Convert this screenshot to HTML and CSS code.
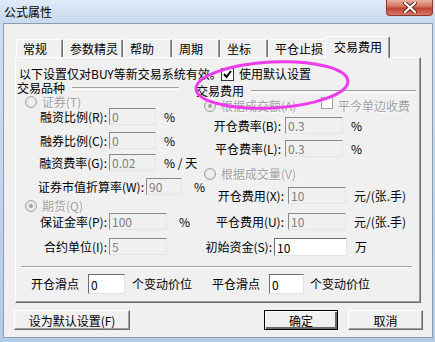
FILE: index.html
```html
<!DOCTYPE html>
<html lang="zh-CN">
<head>
    <meta charset="UTF-8">
    <title>公式属性</title>
    <link rel="stylesheet" href="styles.css">
</head>
<body>
    <div class="window">
        <div class="titlebar">
            <span class="title">公式属性</span>
            <span class="close">
                <svg width="14" height="11" viewBox="0 0 14 11">
                    <path d="M2 1 L12 10 M12 1 L2 10" stroke="#5a2a22" stroke-width="4" stroke-linecap="round"/>
                    <path d="M2 1 L12 10 M12 1 L2 10" stroke="#fff" stroke-width="2.2" stroke-linecap="round"/>
                </svg>
            </span>
        </div>
        <div class="client">
            <div class="tabs">
                <div class="tab w47">常规</div>
                <div class="tab w60">参数精灵</div>
                <div class="tab w49">帮助</div>
                <div class="tab w48">周期</div>
                <div class="tab w48">坐标</div>
                <div class="tab w59">平仓止损</div>
                <div class="tab active">交易费用</div>
            </div>
            <div class="panel">
                <div class="note-row">
                    <span class="note">以下设置仅对BUY等新交易系统有效。</span>
                    <span class="check on">
                        <svg width="11" height="11" viewBox="0 0 11 11"><path d="M2 5 L4.5 8 L9 2" fill="none" stroke="#000" stroke-width="2"/></svg>
                    </span>
                    <span>使用默认设置</span>
                </div>

                <div class="columns">
                    <div class="col col-left">
                        <div class="gb-head"><span>交易品种</span><span class="etch"></span></div>
                        <div class="opt opt-a"><span class="radio"></span><span class="dim">证券(T)</span></div>
                        <div class="row"><span class="lbl l91">融资比例(R):</span><input class="field w47" value="0" disabled><span class="unit">%</span></div>
                        <div class="row mt7"><span class="lbl l91">融券比例(C):</span><input class="field w47" value="0" disabled><span class="unit">%</span></div>
                        <div class="row mt5"><span class="lbl l91">融资费率(G):</span><input class="field w47" value="0.02" disabled><span class="unit">% / 天</span></div>
                        <div class="row mt7"><span class="lbl l128">证券市值折算率(W):</span><input class="field w36" value="90" disabled><span class="unit u12">%</span></div>
                        <div class="opt opt-b"><span class="radio on"></span><span class="dim">期货(Q)</span></div>
                        <div class="row mt1"><span class="lbl l91">保证金率(P):</span><input class="field w58" value="100" disabled><span class="unit u12">%</span></div>
                        <div class="row mt8"><span class="lbl l91">合约单位(I):</span><input class="field w58" value="5" disabled></div>
                    </div>

                    <div class="col col-right">
                        <div class="gb-head"><span>交易费用</span><span class="etch"></span></div>
                        <div class="opt opt-c">
                            <span class="opt-main"><span class="radio on"></span><span class="dim">根据成交额(A)</span></span>
                            <span class="check off"></span><span class="dim">平今单边收费</span>
                        </div>
                        <div class="row mt4"><span class="lbl l87">开仓费率(B):</span><input class="field w58" value="0.3" disabled><span class="unit">%</span></div>
                        <div class="row mt6"><span class="lbl l87">平仓费率(L):</span><input class="field w58" value="0.3" disabled><span class="unit">%</span></div>
                        <div class="opt opt-d"><span class="radio"></span><span class="dim">根据成交量(V)</span></div>
                        <div class="row mt7"><span class="lbl l90">开仓费用(X):</span><input class="field w58" value="10" disabled><span class="unit">元/(张.手)</span></div>
                        <div class="row mt9"><span class="lbl l90">平仓费用(U):</span><input class="field w58" value="10" disabled><span class="unit">元/(张.手)</span></div>
                        <div class="row row-tall mt8"><span class="lbl l78">初始资金(S):</span><input class="field live w73" value="10"><span class="unit">万</span></div>
                    </div>
                </div>

                <div class="sep"></div>

                <div class="slip-row">
                    <span class="slip-lbl">开仓滑点</span><input class="field live slip w37" value="0"><span class="slip-unit">个变动价位</span>
                    <span class="slip-lbl">平仓滑点</span><input class="field live slip w35" value="0"><span class="slip-unit last">个变动价位</span>
                </div>

                <svg class="mark" width="160" height="54" viewBox="0 0 160 54">
                    <ellipse cx="79" cy="27" rx="76" ry="23" transform="rotate(-3 79 27)" fill="none" stroke="#ec3cec" stroke-width="3"/>
                </svg>
            </div>

            <div class="buttons">
                <button class="btn btn-wide">设为默认设置(F)</button>
                <button class="btn btn-ok">确定</button>
                <button class="btn btn-cancel">取消</button>
            </div>
        </div>
    </div>
</body>
</html>
```

FILE: styles.css
```css
body {
    margin: 0;
    font-family: "Noto Sans CJK SC", sans-serif;
    font-size: 12px;
    line-height: 14px;
    color: #000;
}
.window {
    width: 435px;
    height: 342px;
    background: linear-gradient(#cfe0f2, #b4cbe5);
    overflow: hidden;
}
.titlebar {
    height: 23px;
    display: flex;
    align-items: flex-start;
    padding-left: 4px;
    background: linear-gradient(#dfeaf7, #c8daef);
}
.title {
    line-height: 23px;
    font-size: 12px;
}
.close {
    margin-left: auto;
    margin-right: 2px;
    width: 47px;
    height: 16px;
    box-sizing: border-box;
    border: 1px solid #8c3a30;
    border-top: none;
    border-radius: 0 0 4px 4px;
    background: linear-gradient(#eab1a3, #d4705e 45%, #c2432f 55%, #d7786a);
    display: flex;
    align-items: center;
    justify-content: center;
}

/* client area */
.client {
    width: 430px;
    height: 315px;
    margin-left: 3px;
    box-sizing: border-box;
    border: 1px solid #8b9db3;
    background-color: #f0f0f0;
}
.tabs {
    display: flex;
    align-items: flex-end;
    height: 21px;
    margin: 12px 0 0 12px;
}
.tab {
    height: 18px;
    box-sizing: border-box;
    padding-left: 6px;
    line-height: 17px;
    border-top: 1px solid #fff;
    border-left: 1px solid #fff;
    border-right: 1px solid #696969;
    box-shadow: inset -1px 0 #a0a0a0;
    border-radius: 2px 2px 0 0;
    background-color: #f0f0f0;
}
.w47.tab { width: 47px; }
.w60.tab { width: 60px; }
.w49.tab { width: 49px; }
.w48.tab { width: 48px; }
.w59.tab { width: 59px; }
.tab.active {
    position: relative;
    z-index: 1;
    width: 65px;
    height: 22px;
    margin-left: -2px;
    margin-bottom: -1px;
    padding-left: 8px;
    line-height: 19px;
}
.panel {
    position: relative;
    width: 406px;
    height: 246px;
    margin-left: 11px;
    box-sizing: border-box;
    border: 1px solid;
    border-color: #fff #696969 #696969 #fff;
    box-shadow: inset -1px -1px #a0a0a0;
}
.note-row {
    display: flex;
    align-items: center;
    height: 16px;
    margin-top: 8px;
    padding-left: 3px;
}
.note {
    width: 202px;
    white-space: nowrap;
}
.check {
    width: 13px;
    height: 13px;
    box-sizing: border-box;
    border: 1px solid #333;
    background-color: #fff;
    margin-right: 5px;
    display: flex;
    align-items: center;
    justify-content: center;
}
.check.off {
    width: 12px;
    height: 12px;
    border-color: #a0a0a0;
    margin-top: -6px;
}
.columns {
    display: grid;
    grid-template-columns: 178px 1fr;
}
.col-right {
    padding-top: 3px;
}
.gb-head {
    display: flex;
    align-items: center;
    height: 12px;
    line-height: 12px;
    padding-left: 1px;
}
.col-left .gb-head { margin-right: 15px; }
.col-right .gb-head { margin-right: 4px; padding-left: 2px; }
.etch {
    flex: 1;
    height: 1px;
    margin-left: 7px;
    border-top: 1px solid #a0a0a0;
    border-bottom: 1px solid #fff;
}
.opt {
    display: flex;
    align-items: center;
    height: 12px;
    line-height: 12px;
}
.opt-a { margin-top: 2px; padding-left: 9px; }
.opt-b { margin-top: 5px; padding-left: 9px; }
.opt-c { margin-top: 2px; height: 14px; padding-left: 10px; }
.opt-d { margin-top: 11px; padding-left: 10px; }
.opt-main {
    display: flex;
    align-items: center;
    width: 117px;
}
.radio {
    width: 12px;
    height: 12px;
    box-sizing: border-box;
    border-radius: 50%;
    border: 1px solid #a0a0a0;
    background: radial-gradient(#f6f6f6, #dcdcdc);
    margin-right: 5px;
    display: flex;
    align-items: center;
    justify-content: center;
}
.radio.on::after {
    content: "";
    width: 4px;
    height: 4px;
    border-radius: 50%;
    background-color: #a0a0a0;
}
.dim {
    color: #a0a0a0;
    text-shadow: 1px 1px #fff;
    white-space: nowrap;
}
.row {
    display: flex;
    align-items: center;
    height: 17px;
    white-space: nowrap;
}
.row-tall { height: 18px; }
.mt1 { margin-top: 1px; }
.mt4 { margin-top: 4px; }
.mt5 { margin-top: 5px; }
.mt6 { margin-top: 6px; }
.mt7 { margin-top: 7px; }
.mt8 { margin-top: 8px; }
.mt9 { margin-top: 9px; }
.lbl {
    text-align: right;
    flex: none;
}
.l91 { width: 91px; margin-right: 2px; }
.l128 { width: 128px; margin-right: 2px; }
.l87 { width: 87px; margin-right: 4px; }
.l90 { width: 90px; margin-right: 4px; }
.l78 { width: 78px; margin-right: 2px; }
.field {
    height: 100%;
    box-sizing: border-box;
    margin: 0;
    padding: 0 0 0 2px;
    border: 1px solid;
    border-color: #8a8a8a #e3e3e3 #e3e3e3 #8a8a8a;
    background-color: #f0f0f0;
    color: #808080;
    font-family: inherit;
    font-size: 12px;
    outline: none;
}
.field.live {
    background-color: #fff;
    color: #000;
    border-color: #6d6d6d #e3e3e3 #e3e3e3 #6d6d6d;
}
.w35 { width: 35px; }
.w36 { width: 36px; }
.w37 { width: 37px; }
.w47 { width: 47px; }
.w58 { width: 58px; }
.w73 { width: 73px; }
.unit { margin-left: 8px; }
.unit.u12 { margin-left: 12px; }
.sep {
    width: 391px;
    height: 0;
    margin: 10px 0 0 5px;
    border-top: 1px solid #a0a0a0;
    border-bottom: 1px solid #fff;
}
.slip-row {
    display: flex;
    align-items: center;
    height: 20px;
    margin-top: 6px;
    padding-left: 15px;
    white-space: nowrap;
}
.slip-lbl { width: 57px; }
.slip-unit { width: 80px; padding-left: 7px; }
.slip-unit.last { width: auto; padding-left: 6px; }
.mark {
    position: absolute;
    left: 177px;
    top: 0;
    overflow: visible;
}

/* dialog buttons */
.buttons {
    display: flex;
    margin-top: 7px;
    padding: 0 9px 0 10px;
}
.btn {
    height: 20px;
    box-sizing: border-box;
    padding: 0;
    font-family: inherit;
    font-size: 12px;
    color: #000;
    background-color: #f0f0f0;
    border: 1px solid;
    border-color: #fff #696969 #696969 #fff;
    box-shadow: inset -1px -1px #a0a0a0;
}
.btn-wide { width: 116px; }
.btn-ok {
    width: 74px;
    margin-left: auto;
    border: 1px solid #000;
    box-shadow: inset 1px 1px #fff, inset -2px -2px #696969;
}
.btn-cancel {
    width: 75px;
    margin-left: 10px;
}
```
